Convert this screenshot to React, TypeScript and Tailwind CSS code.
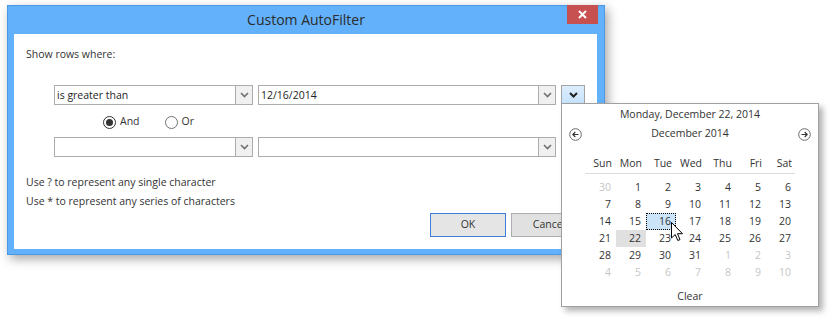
import React from "react";

const Chevron = ({ color = "#707070", w = 1.6 }: { color?: string; w?: number }) => (
  <svg width="9" height="6" viewBox="0 0 9 6">
    <path d="M1 1 L4.5 4.5 L8 1" stroke={color} strokeWidth={w} fill="none" />
  </svg>
);

function Combo({ className, text }: { className: string; text?: string }) {
  return (
    <div className={`flex h-[20px] border border-[#acacac] bg-white ${className}`}>
      <div className="flex-1 pl-[2px] leading-[18px] text-[#1e1e1e]">{text}</div>
      <div className="flex w-[17px] items-center justify-center border-l border-[#acacac] bg-[#f0f0f0]">
        <Chevron />
      </div>
    </div>
  );
}

const NavCircle = ({ dir }: { dir: "l" | "r" }) => (
  <svg width="13" height="13" viewBox="0 0 13 13">
    <circle cx="6.5" cy="6.5" r="5.8" stroke="#6a6a6a" strokeWidth="1" fill="white" />
    {dir === "l" ? (
      <path d="M9.5 6.5 H3.8 M6.3 4 L3.8 6.5 L6.3 9" stroke="#333" strokeWidth="1.1" fill="none" />
    ) : (
      <path d="M3.5 6.5 H9.2 M6.7 4 L9.2 6.5 L6.7 9" stroke="#333" strokeWidth="1.1" fill="none" />
    )}
  </svg>
);

const weeks: [number, boolean][][] = [
  [[30, true], [1, false], [2, false], [3, false], [4, false], [5, false], [6, false]],
  [[7, false], [8, false], [9, false], [10, false], [11, false], [12, false], [13, false]],
  [[14, false], [15, false], [16, false], [17, false], [18, false], [19, false], [20, false]],
  [[21, false], [22, false], [23, false], [24, false], [25, false], [26, false], [27, false]],
  [[28, false], [29, false], [30, false], [31, false], [1, true], [2, true], [3, true]],
  [[4, true], [5, true], [6, true], [7, true], [8, true], [9, true], [10, true]],
];

export default function App() {
  return (
    <div className="relative h-[322px] w-[832px] overflow-hidden bg-white font-['Open_Sans',sans-serif] text-[10.5px] text-[#333]">
      {/* Dialog */}
      <div className="ml-[7px] mt-[5px] flex h-[250px] w-[598px] flex-col border border-[#4d98e4] bg-[#63b1fb] shadow-[3px_4px_10px_rgba(0,0,0,0.35)]">
        <div className="relative flex h-[28px] items-center justify-center">
          <span className="text-[14px] leading-none text-[#2b2b2b]">Custom AutoFilter</span>
          <div className="absolute right-[6px] top-[-1px] flex h-[19px] w-[31px] items-center justify-center bg-[#c75050]">
            <svg width="9" height="9" viewBox="0 0 9 9">
              <path d="M1 1 L8 8 M8 1 L1 8" stroke="white" strokeWidth="2" />
            </svg>
          </div>
        </div>
        <div className="ml-[6px] flex h-[215px] w-[583px] flex-col bg-white pt-[13px]">
          <div className="pl-[12px] leading-[15px]">Show rows where:</div>
          <div className="mt-[23px] flex gap-[5px] pl-[40px]">
            <Combo className="w-[199px]" text="is greater than" />
            <Combo className="w-[298px]" text="12/16/2014" />
            <div className="flex h-[19px] w-[24px] items-center justify-center border border-b-0 border-[#a3a3a3] bg-gradient-to-b from-[#dcedfd] to-[#c6e2fc]">
              <Chevron color="#222" w={2} />
            </div>
          </div>
          <div className="mt-[9px] flex h-[16px] items-center pl-[89px]">
            <div className="flex h-[13px] w-[13px] items-center justify-center rounded-full border border-[#333]">
              <div className="h-[7px] w-[7px] rounded-full bg-[#333]" />
            </div>
            <span className="ml-[4px]">And</span>
            <div className="ml-[25px] h-[13px] w-[13px] rounded-full border border-[#707070]" />
            <span className="ml-[4px]">Or</span>
          </div>
          <div className="mt-[7px] flex gap-[5px] pl-[40px]">
            <Combo className="w-[199px]" />
            <Combo className="w-[298px]" />
          </div>
          <div className="mt-[16px] pl-[12px] leading-[19px]">Use ? to represent any single character</div>
          <div className="pl-[12px] leading-[19px]">Use * to represent any series of characters</div>
          <div className="mt-[2px] flex justify-end gap-[5px] pr-[10px]">
            <div className="flex h-[24px] w-[76px] items-center justify-center border border-[#3c7fd8] bg-[#e5e5e5]">OK</div>
            <div className="flex h-[24px] w-[76px] items-center justify-center border border-[#adadad] bg-[#e1e1e1]">Cancel</div>
          </div>
        </div>
      </div>

      {/* Calendar popup */}
      <div className="absolute left-[561px] top-[103px] flex h-[204px] w-[258px] flex-col border border-[#a0a0a0] bg-white text-[10.5px] shadow-[4px_4px_6px_rgba(0,0,0,0.3)]">
        <div className="mt-[1px] h-[18px] text-center leading-[18px]">Monday, December 22, 2014</div>
        <div className="flex h-[22px] items-center justify-between px-[7px]">
          <NavCircle dir="l" />
          <span>December 2014</span>
          <NavCircle dir="r" />
        </div>
        <div className="ml-[23px] mt-[9px] grid w-[210px] grid-cols-7 border-b border-[#dcdcdc] pb-[1px]">
          {["Sun", "Mon", "Tue", "Wed", "Thu", "Fri", "Sat"].map((d) => (
            <div key={d} className="h-[18px] pr-[3px] text-right leading-[18px]">
              {d}
            </div>
          ))}
        </div>
        <div className="ml-[24px] mt-[5px] grid w-[210px] grid-cols-7">
          {weeks.flatMap((wk, wi) =>
            wk.map(([n, grey], di) => {
              const sel = wi === 2 && di === 2;
              const today = wi === 3 && di === 1;
              return (
                <div
                  key={`${wi}-${di}`}
                  className={`h-[17px] pr-[4px] text-right leading-[15px] ${
                    sel
                      ? "border border-dotted border-black bg-[#cce4f7]"
                      : today
                      ? "border border-transparent bg-[#e0e0e0]"
                      : "border border-transparent"
                  } ${grey ? "text-[#c6c6c6]" : "text-[#333]"}`}
                >
                  {n}
                </div>
              );
            })
          )}
        </div>
        <div className="mt-[6px] h-[18px] text-center leading-[18px]">Clear</div>
      </div>

      {/* Cursor */}
      <svg className="absolute left-[671px] top-[222px]" width="13" height="20" viewBox="0 0 13 20">
        <path d="M0.5 0.5 L0.5 16 L4.2 12.5 L6.8 18.5 L9 17.6 L6.5 11.7 L11.5 11.7 Z" fill="white" stroke="black" strokeWidth="1" strokeLinejoin="miter" />
      </svg>
    </div>
  );
}
